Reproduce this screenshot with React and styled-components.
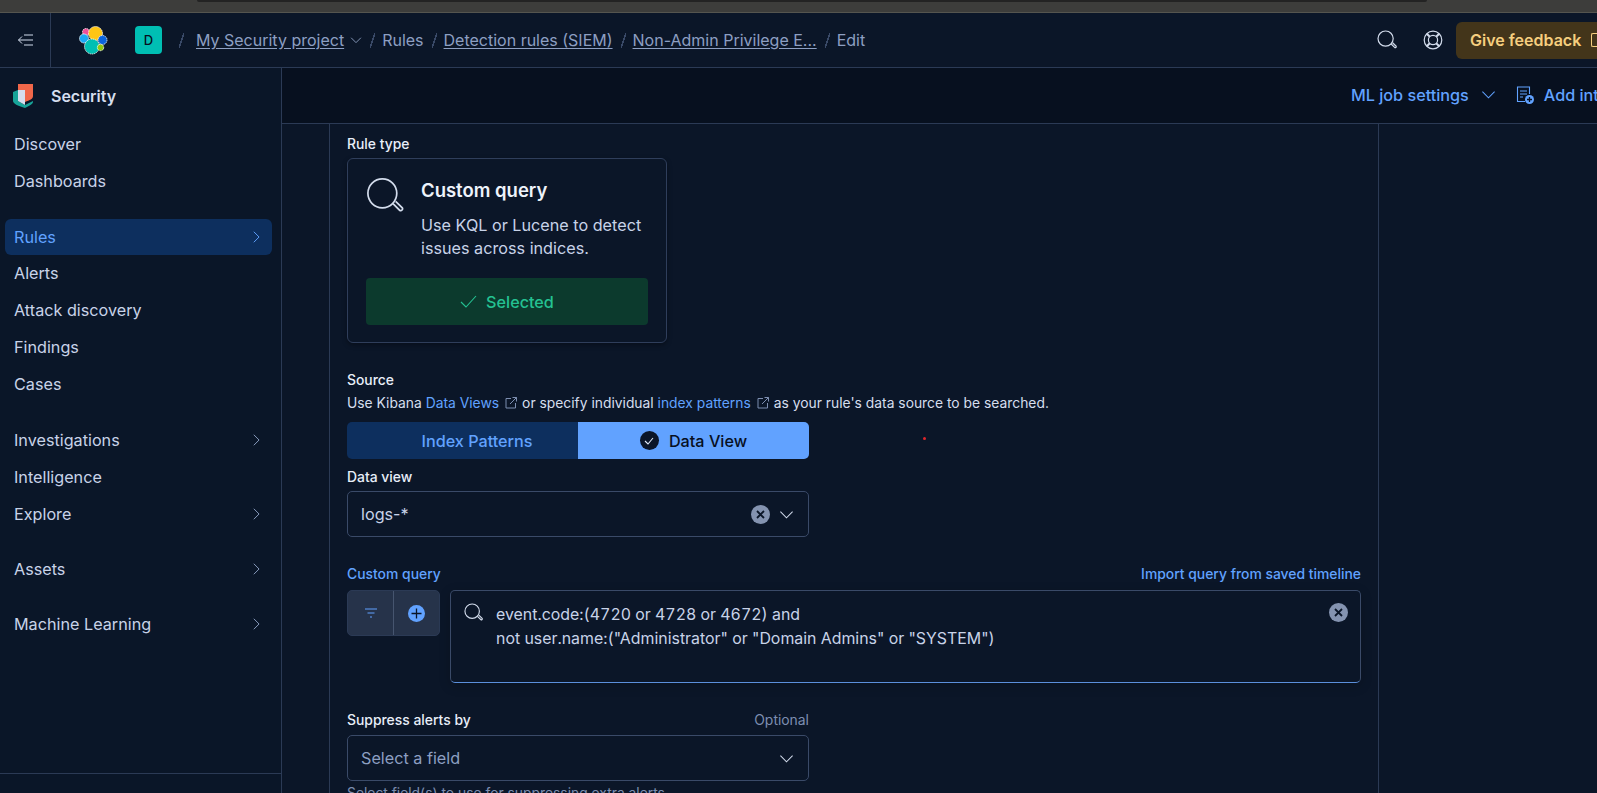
import React from 'react'
import styled, { createGlobalStyle } from 'styled-components'

const GlobalStyle = createGlobalStyle`
  html, body {
    margin: 0;
    background: #0b1628;
    overflow: hidden;
  }
  * {
    box-sizing: border-box;
  }
`

const Page = styled.div`
  position: relative;
  width: 1597px;
  height: 793px;
  overflow: hidden;
  display: flex;
  flex-direction: column;
  background: #0b1628;
  font-family: Inter, 'Liberation Sans', sans-serif;
  font-size: 15px;
  color: #d5deee;
`

const BrowserStrip = styled.div`
  height: 13px;
  flex: none;
  background: #3d3d3b;
  border-bottom: 1px solid #55554f;
`

const StripNotch = styled.div`
  width: 1230px;
  height: 2px;
  margin-left: 197px;
  background: #232323;
  border-radius: 0 0 6px 6px;
`

const TopBar = styled.header`
  height: 55px;
  flex: none;
  display: flex;
  align-items: center;
  border-bottom: 1px solid #2b3a55;
  white-space: nowrap;
`

const ToggleCell = styled.div`
  width: 51px;
  height: 100%;
  flex: none;
  display: flex;
  align-items: center;
  justify-content: center;
  border-right: 1px solid #2b3a55;
`

const LogoSlot = styled.div`
  width: 84px;
  flex: none;
  display: flex;
  justify-content: center;
`

const Avatar = styled.div`
  width: 27px;
  height: 28px;
  flex: none;
  border-radius: 4px;
  background: #00bfb3;
  color: #07101f;
  font-size: 13px;
  font-weight: 500;
  display: flex;
  align-items: center;
  justify-content: center;
`

const Crumbs = styled.nav`
  display: flex;
  align-items: center;
  margin-left: 9px;
  font-size: 16px;
  color: #8d9fc2;
`

const Slash = styled.span`
  width: 5px;
  height: 15px;
  margin: 0 7px 0 8px;
  background: linear-gradient(to bottom right, transparent 42%, #3a4a68 42%, #3a4a68 58%, transparent 58%);
`

const Crumb = styled.span`
  margin-left: ${(p) => (p.$first ? '5px' : '0')};
  text-decoration: ${(p) => (p.$link ? 'underline' : 'none')};
  text-underline-offset: 2px;
`

const TopActions = styled.div`
  margin-left: auto;
  display: flex;
  align-items: center;
`

const RoundIcon = styled.div`
  width: 46px;
  display: flex;
  justify-content: center;
  color: #d3dcec;
`

const Feedback = styled.div`
  width: 141px;
  height: 37px;
  border-radius: 6px 0 0 6px;
  background: #43351a;
  color: #f6cf7f;
  font-weight: 600;
  font-size: 16px;
  display: flex;
  align-items: center;
  gap: 10px;
  padding-left: 14px;
  flex: none;
`

const FeedbackIcon = styled.span`
  width: 8px;
  height: 14px;
  flex: none;
  border: 1.5px solid #f6cf7f;
  border-right: none;
  border-radius: 2px 0 0 2px;
`

const Body = styled.div`
  flex: 1;
  min-height: 0;
  display: flex;
`

const Sidebar = styled.aside`
  width: 282px;
  flex: none;
  display: flex;
  flex-direction: column;
  border-right: 1px solid #2b3a55;
  background: #0a1628;
`

const SideTitle = styled.div`
  display: flex;
  align-items: center;
  gap: 18px;
  height: 56px;
  padding-left: 13px;
  font-weight: 600;
  font-size: 16px;
  color: #d5deee;
`

const SideNav = styled.nav`
  flex: 1;
  padding: 1.5px 9px 0 5px;
`

const SideItem = styled.div`
  height: ${(p) => (p.$active ? '36px' : '37px')};
  display: flex;
  align-items: center;
  justify-content: space-between;
  padding: 0 9px;
  margin-bottom: ${(p) => p.$after || 0}px;
  border-radius: 6px;
  font-size: 16.2px;
  background: ${(p) => (p.$active ? '#0d2f5e' : 'transparent')};
  color: ${(p) => (p.$active ? '#61a2ff' : '#c8d3e8')};
`

const SideFooter = styled.div`
  height: 20px;
  flex: none;
  border-top: 1px solid #2b3a55;
`

const Content = styled.main`
  flex: 1;
  min-width: 0;
  display: flex;
  flex-direction: column;
`

const SubBar = styled.div`
  height: 56px;
  flex: none;
  display: flex;
  align-items: center;
  padding: 0 0 2px 1069px;
  background: #07101f;
  border-bottom: 1px solid #2b3a55;
  color: #61a2ff;
  font-size: 16.2px;
  font-weight: 500;
  white-space: nowrap;
`

const SubChevron = styled.span`
  display: flex;
  margin: 0 20px 0 12px;
`

const SubIcon = styled.span`
  display: flex;
  margin-right: 10px;
`

const Panel = styled.section`
  width: 1050px;
  flex: 1;
  margin-left: 47px;
  padding: 12px 17px 0;
  border-left: 1px solid #2b3a55;
  border-right: 1px solid #2b3a55;
  overflow: hidden;
`

const Label = styled.div`
  font-size: 13.9px;
  line-height: 16px;
  font-weight: 500;
  color: ${(p) => (p.$blue ? '#61a2ff' : '#e8eef9')};
`

const RuleCard = styled.div`
  width: 320px;
  height: 185px;
  margin-top: 6px;
  padding: 18px 18px 0;
  border: 1px solid #2f3e5b;
  border-radius: 6px;
  box-shadow: 0 2px 5px rgba(0, 0, 0, 0.35);
  background: #0b1628;
`

const CardHead = styled.div`
  display: flex;
  gap: 17px;
  height: 101px;
`

const CardTitle = styled.div`
  font-size: 18.5px;
  line-height: 26px;
  font-weight: 600;
  color: #eef3fb;
  margin-bottom: 10.5px;
`

const CardText = styled.div`
  font-size: 16.2px;
  line-height: 23.5px;
  color: #c8d3e8;
`

const SelectedBar = styled.div`
  height: 47px;
  border-radius: 4px;
  background: #0c3a2d;
  color: #24c292;
  font-size: 16.2px;
  font-weight: 500;
  display: flex;
  align-items: center;
  justify-content: center;
  gap: 9px;
`

const SourceLabel = styled(Label)`
  margin-top: 29px;
`

const Help = styled.div`
  font-size: 13.85px;
  line-height: 18px;
  margin-top: 6px;
  color: #d5deee;
  display: flex;
  align-items: center;
  white-space: pre;
`

const TextLink = styled.span`
  color: #61a2ff;
`

const External = styled.span`
  display: flex;
  margin: 0 5px 0 6px;
`

const Toggle = styled.div`
  width: 462px;
  height: 37px;
  margin-top: 10px;
  display: flex;
  border-radius: 5px;
  overflow: hidden;
  font-size: 16.2px;
  font-weight: 500;
`

const ToggleOption = styled.div`
  flex: 0 0 50%;
  display: flex;
  align-items: center;
  justify-content: center;
  gap: 10px;
  padding-left: ${(p) => (p.$on ? '0' : '29px')};
  background: ${(p) => (p.$on ? '#61a2ff' : '#0d2f5e')};
  color: ${(p) => (p.$on ? '#07101f' : '#61a2ff')};
`

const CheckDot = styled.span`
  width: 19px;
  height: 19px;
  border-radius: 50%;
  background: #0b1628;
  display: flex;
  align-items: center;
  justify-content: center;
`

const FieldLabel = styled(Label)`
  margin-top: 10px;
`

const SelectBox = styled.div`
  width: 462px;
  height: 46px;
  margin-top: 6px;
  padding: 0 14px 0 13px;
  display: flex;
  align-items: center;
  border: 1px solid #3a4a68;
  border-radius: 5px;
  font-size: 16.2px;
  color: ${(p) => (p.$placeholder ? '#8d9fc2' : '#c8d3e8')};
`

const SelectIcons = styled.div`
  margin-left: auto;
  display: flex;
  align-items: center;
  gap: 9px;
`

const ClearBadge = styled.span`
  width: 19px;
  height: 19px;
  border-radius: 50%;
  background: #8493b0;
  display: flex;
  align-items: center;
  justify-content: center;
  flex: none;
`

const QueryHead = styled.div`
  display: flex;
  justify-content: space-between;
  align-items: center;
  margin-top: 29px;
`

const QueryRow = styled.div`
  display: flex;
  gap: 10px;
  margin-top: 8px;
  align-items: flex-start;
`

const FilterGroup = styled.div`
  width: 93px;
  height: 46px;
  flex: none;
  display: flex;
  border: 1px solid #2b3a55;
  border-radius: 5px;
  background: #26334a;
`

const FilterCell = styled.div`
  flex: 1;
  display: flex;
  align-items: center;
  justify-content: center;
  & + & {
    border-left: 1px solid #46556f;
  }
`

const PlusDot = styled.span`
  width: 17px;
  height: 17px;
  border-radius: 50%;
  background: #61a2ff;
  display: flex;
  align-items: center;
  justify-content: center;
`

const QueryBox = styled.div`
  flex: 1;
  height: 93px;
  display: flex;
  padding: 12px 12px 0 13px;
  border: 1px solid #3a4a68;
  border-bottom: 1px solid #5b8fdb;
  border-radius: 5px;
  box-shadow: 0 3px 12px rgba(0, 0, 0, 0.2);
`

const QueryIcon = styled.span`
  display: flex;
  margin-right: 13px;
  height: 20px;
`

const QueryText = styled.div`
  flex: 1;
  font-size: 15.9px;
  line-height: 24px;
  color: #c8d3e8;
  font-variant-numeric: tabular-nums;
`

const SuppressHead = styled.div`
  width: 462px;
  display: flex;
  justify-content: space-between;
  margin: 29px 0 7px;
`

const Optional = styled.span`
  font-size: 13.9px;
  line-height: 16px;
  color: #7d8eb0;
`

const ClippedHelp = styled.div`
  font-size: 13.85px;
  line-height: 16px;
  margin-top: 4px;
  color: #7d8eb0;
`

const FieldSelect = styled(SelectBox)`
  margin-top: 0;
`

const RedSpeck = styled.i`
  position: absolute;
  left: 923px;
  top: 437px;
  width: 3px;
  height: 3px;
  border-radius: 50%;
  background: #e0262b;
`

const Chevron = ({ dir = 'down', size = 16, color = 'currentColor' }) => (
  <svg width={size} height={size} viewBox="0 0 16 16" fill="none" stroke={color} strokeWidth="1.1">
    {dir === 'down' ? <path d="M1.5 5l6.5 6.5L14.5 5" /> : <path d="M5.5 2l6 6-6 6" />}
  </svg>
)

const Magnifier = ({ size = 20, color = '#d3dcec', width = 1.2 }) => (
  <svg width={size} height={size} viewBox="0 0 20 20" fill="none" stroke={color} strokeWidth={width}>
    <circle cx="8.6" cy="8.6" r="7.6" />
    <path d="M14.2 14l3.6 3.6a1 1 0 0 0 1.3-1.4l-3.5-3.4" />
  </svg>
)

const Cross = ({ color = '#0b1628' }) => (
  <svg width="9" height="9" viewBox="0 0 9 9" stroke={color} strokeWidth="1.8" fill="none">
    <path d="M1 1l7 7M8 1L1 8" />
  </svg>
)

const ExternalIcon = () => (
  <svg width="12" height="12" viewBox="0 0 12 12" fill="none" stroke="#7d8eb0" strokeWidth="1">
    <path d="M6 1.5H1v9.500h9.500V6M7.500.5h4v4M11.500.5L5 7" />
  </svg>
)

const ElasticLogo = () => (
  <svg width="29" height="29" viewBox="0 0 29 29">
    <g stroke="#fff" strokeWidth="0.8" strokeDasharray="1.5 0.6">
      <circle cx="7" cy="6" r="3.500" fill="#f04e98" />
      <circle cx="16.500" cy="7.500" r="7" fill="#fec514" />
      <circle cx="5" cy="12.500" r="4.500" fill="#1ba9f5" />
      <circle cx="23.500" cy="14" r="4.500" fill="#0b64dd" />
      <circle cx="13" cy="20.500" r="7.500" fill="#00bfb3" />
      <circle cx="21.500" cy="21.500" r="3.200" fill="#93c90e" />
    </g>
  </svg>
)

const SecurityLogo = () => (
  <svg width="20" height="24" viewBox="0 0 20 24">
    <path d="M5 0H20V12C20 15 17 16 12 18V6H5Z" fill="#f0674a" />
    <path d="M0 8L5 6V17L12 21L20 17V18C20 20 16 22 12 24C6 22 0 20 0 17Z" fill="#17a398" />
    <path d="M5 6H12V21L5 17Z" fill="#d5deee" />
  </svg>
)

const FilterLines = () => (
  <svg width="14" height="12" viewBox="0 0 14 12" stroke="#61a2ff" strokeWidth="1.100">
    <path d="M1 2h12M3.500 6h7M6 10h2" />
  </svg>
)

const PlusIcon = () => (
  <svg width="11" height="11" viewBox="0 0 11 11" stroke="#0b1628" strokeWidth="1.300">
    <path d="M5.500 0.500v10M0.500 5.500h10" />
  </svg>
)

const navGroups = [
  { name: 'Discover' },
  { name: 'Dashboards', after: 19.5 },
  { name: 'Rules', arrow: true, active: true, after: -0.5 },
  { name: 'Alerts' },
  { name: 'Attack discovery' },
  { name: 'Findings' },
  { name: 'Cases', after: 19 },
  { name: 'Investigations', arrow: true },
  { name: 'Intelligence' },
  { name: 'Explore', arrow: true, after: 18 },
  { name: 'Assets', arrow: true, after: 18 },
  { name: 'Machine Learning', arrow: true }
]

const App = () => (
  <Page>
    <GlobalStyle />
    <BrowserStrip>
      <StripNotch />
    </BrowserStrip>
    <TopBar>
      <ToggleCell>
        <svg width="17" height="12" viewBox="0 0 17 12" fill="none" stroke="#d3dcec" strokeWidth="1">
          <path d="M5 2.500L1.500 6 5 9.500M1.500 6H16M7 1h9M7 11h9" />
        </svg>
      </ToggleCell>
      <LogoSlot>
        <ElasticLogo />
      </LogoSlot>
      <Avatar>D</Avatar>
      <Crumbs>
        <Slash />
        <Crumb $link $first>
          My Security project
        </Crumb>
        <svg width="12" height="12" viewBox="0 0 16 16" fill="none" stroke="#8d9fc2" strokeWidth="1.200" style={{ marginLeft: 6 }}>
          <path d="M1.500 5l6.500 6.500L14.500 5" />
        </svg>
        <Slash />
        <Crumb>Rules</Crumb>
        <Slash />
        <Crumb $link>Detection rules (SIEM)</Crumb>
        <Slash />
        <Crumb $link>Non-Admin Privilege E...</Crumb>
        <Slash />
        <Crumb>Edit</Crumb>
      </Crumbs>
      <TopActions>
        <RoundIcon>
          <Magnifier />
        </RoundIcon>
        <RoundIcon>
          <svg width="20" height="20" viewBox="0 0 20 20" fill="none" stroke="#d3dcec" strokeWidth="1.200">
            <circle cx="10" cy="10" r="8.800" />
            <circle cx="10" cy="10" r="4.600" />
            <path d="M3.800 3.800l3 3M16.200 3.800l-3 3M3.800 16.200l3-3M16.200 16.200l-3-3" strokeWidth="2" />
          </svg>
        </RoundIcon>
        <Feedback>
          Give feedback
          <FeedbackIcon />
        </Feedback>
      </TopActions>
    </TopBar>
    <Body>
      <Sidebar>
        <SideTitle>
          <SecurityLogo />
          Security
        </SideTitle>
        <SideNav>
          {navGroups.map((item) => (
            <SideItem key={item.name} $active={item.active} $after={item.after}>
              {item.name}
              {item.arrow && <Chevron dir="right" size={14} color={item.active ? '#61a2ff' : '#8d9fc2'} />}
            </SideItem>
          ))}
        </SideNav>
        <SideFooter />
      </Sidebar>
      <Content>
        <SubBar>
          ML job settings
          <SubChevron>
            <Chevron size={15} />
          </SubChevron>
          <SubIcon>
            <svg width="18" height="18" viewBox="0 0 18 18" fill="none" stroke="#61a2ff" strokeWidth="1.100">
              <path d="M9 15.500H1.500V1h12v7M4 5h7M4 8h7M4 11h3" />
              <circle cx="13.500" cy="13.500" r="4.500" fill="#61a2ff" stroke="none" />
              <path d="M13.500 11v5M11 13.500h5" stroke="#07101f" strokeWidth="1.300" />
            </svg>
          </SubIcon>
          Add integrations
        </SubBar>
        <Panel>
          <Label>Rule type</Label>
          <RuleCard>
            <CardHead>
              <Magnifier size={38} width={0.9} />
              <div>
                <CardTitle>Custom query</CardTitle>
                <CardText>
                  Use KQL or Lucene to detect
                  <br />
                  issues across indices.
                </CardText>
              </div>
            </CardHead>
            <SelectedBar>
              <svg width="17" height="13" viewBox="0 0 17 13" fill="none" stroke="#24c292" strokeWidth="1.100">
                <path d="M1 7l5 5L16 1" />
              </svg>
              Selected
            </SelectedBar>
          </RuleCard>
          <SourceLabel>Source</SourceLabel>
          <Help>
            Use Kibana <TextLink>Data Views</TextLink>
            <External>
              <ExternalIcon />
            </External>
            or specify individual <TextLink>index patterns</TextLink>
            <External>
              <ExternalIcon />
            </External>
            as your rule's data source to be searched.
          </Help>
          <Toggle>
            <ToggleOption>Index Patterns</ToggleOption>
            <ToggleOption $on>
              <CheckDot>
                <svg width="10" height="8" viewBox="0 0 10 8" fill="none" stroke="#dfe8f6" strokeWidth="1.100">
                  <path d="M1 4l3 3 5-6" />
                </svg>
              </CheckDot>
              Data View
            </ToggleOption>
          </Toggle>
          <FieldLabel>Data view</FieldLabel>
          <SelectBox>
            logs-*
            <SelectIcons>
              <ClearBadge>
                <Cross />
              </ClearBadge>
              <Chevron size={15} color="#d3dcec" />
            </SelectIcons>
          </SelectBox>
          <QueryHead>
            <Label $blue>Custom query</Label>
            <Label $blue>Import query from saved timeline</Label>
          </QueryHead>
          <QueryRow>
            <FilterGroup>
              <FilterCell>
                <FilterLines />
              </FilterCell>
              <FilterCell>
                <PlusDot>
                  <PlusIcon />
                </PlusDot>
              </FilterCell>
            </FilterGroup>
            <QueryBox>
              <QueryIcon>
                <Magnifier size={19} />
              </QueryIcon>
              <QueryText>
                event.code:(4720 or 4728 or 4672) and
                <br />
                not user.name:("Administrator" or "Domain Admins" or "SYSTEM")
              </QueryText>
              <ClearBadge>
                <Cross />
              </ClearBadge>
            </QueryBox>
          </QueryRow>
          <SuppressHead>
            <Label>Suppress alerts by</Label>
            <Optional>Optional</Optional>
          </SuppressHead>
          <FieldSelect $placeholder>
            Select a field
            <SelectIcons>
              <Chevron size={15} color="#d3dcec" />
            </SelectIcons>
          </FieldSelect>
          <ClippedHelp>Select field(s) to use for suppressing extra alerts.</ClippedHelp>
        </Panel>
      </Content>
    </Body>
    <RedSpeck />
  </Page>
)

export default App
